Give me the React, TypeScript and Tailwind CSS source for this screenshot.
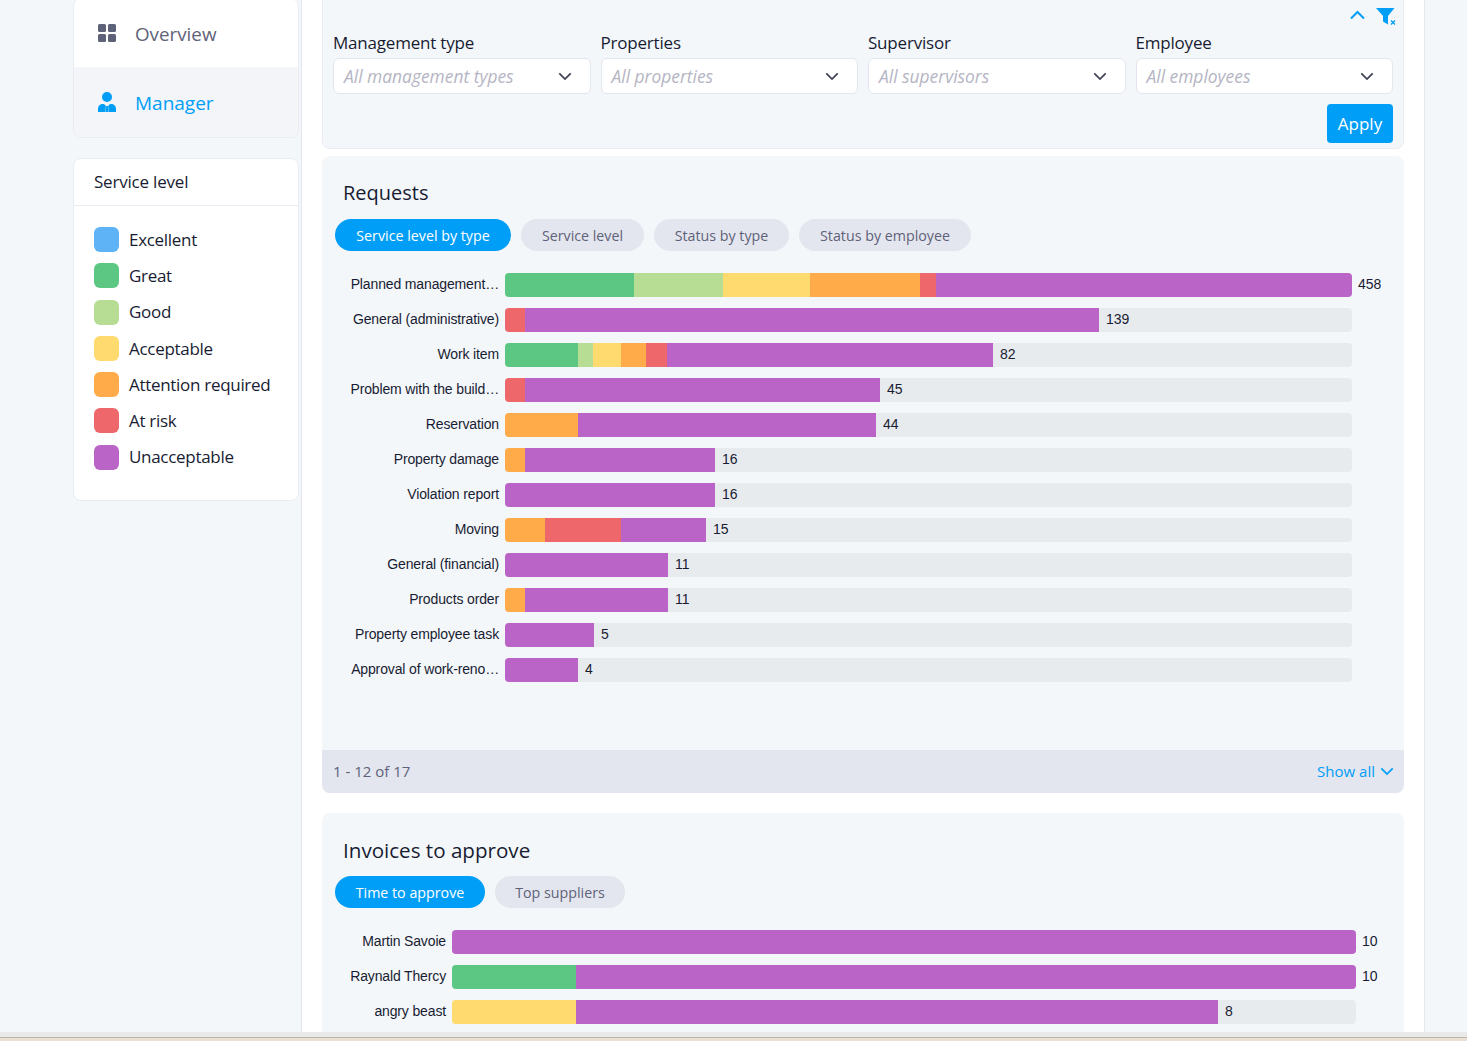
import React from 'react';

const GREEN = 'bg-[#5cc782]';
const LIME = 'bg-[#b7dd95]';
const YELLOW = 'bg-[#ffda6e]';
const ORANGE = 'bg-[#ffab4a]';
const RED = 'bg-[#ee686b]';
const PURPLE = 'bg-[#ba64c8]';

type Row = { label: string; value: number; segments: [string, number][] };

const REQUESTS: Row[] = [
  { label: 'Planned management…', value: 458, segments: [[GREEN, 129], [LIME, 89], [YELLOW, 87], [ORANGE, 110], [RED, 16], [PURPLE, 416]] },
  { label: 'General (administrative)', value: 139, segments: [[RED, 20], [PURPLE, 574]] },
  { label: 'Work item', value: 82, segments: [[GREEN, 73], [LIME, 15], [YELLOW, 28], [ORANGE, 25], [RED, 21], [PURPLE, 326]] },
  { label: 'Problem with the build…', value: 45, segments: [[RED, 20], [PURPLE, 355]] },
  { label: 'Reservation', value: 44, segments: [[ORANGE, 73], [PURPLE, 298]] },
  { label: 'Property damage', value: 16, segments: [[ORANGE, 20], [PURPLE, 190]] },
  { label: 'Violation report', value: 16, segments: [[PURPLE, 210]] },
  { label: 'Moving', value: 15, segments: [[ORANGE, 40], [RED, 76], [PURPLE, 85]] },
  { label: 'General (financial)', value: 11, segments: [[PURPLE, 163]] },
  { label: 'Products order', value: 11, segments: [[ORANGE, 20], [PURPLE, 143]] },
  { label: 'Property employee task', value: 5, segments: [[PURPLE, 89]] },
  { label: 'Approval of work-reno…', value: 4, segments: [[PURPLE, 73]] },
];

const INVOICES: Row[] = [
  { label: 'Martin Savoie', value: 10, segments: [[PURPLE, 904]] },
  { label: 'Raynald Thercy', value: 10, segments: [[GREEN, 124], [PURPLE, 780]] },
  { label: 'angry beast', value: 8, segments: [[YELLOW, 124], [PURPLE, 642]] },
];

const LEGEND: [string, string][] = [
  ['bg-[#5eb3f6]', 'Excellent'],
  [GREEN, 'Great'],
  [LIME, 'Good'],
  [YELLOW, 'Acceptable'],
  [ORANGE, 'Attention required'],
  [RED, 'At risk'],
  [PURPLE, 'Unacceptable'],
];

const FILTERS: [string, string][] = [
  ['Management type', 'All management types'],
  ['Properties', 'All properties'],
  ['Supervisor', 'All supervisors'],
  ['Employee', 'All employees'],
];

const Chevron = ({ up, className }: { up?: boolean; className: string }) => (
  <svg viewBox="0 0 16 10" fill="none" stroke="currentColor" strokeWidth="2" className={className}>
    <path d={up ? 'M1.5 8.5 8 2l6.5 6.5' : 'M1.5 1.5 8 8l6.5-6.5'} />
  </svg>
);

const BarRow = ({ row, labelWidth, trackWidth }: { row: Row; labelWidth: string; trackWidth: number }) => {
  const filled = row.segments.reduce((sum, [, w]) => sum + w, 0);
  const full = filled > trackWidth - 40;

  return (
    <div className="flex h-[24px] items-center font-['Liberation_Sans',sans-serif] text-[14px] text-[#181c32]">
      <div className={`${labelWidth} whitespace-nowrap pb-[1px] pr-[6px] text-right tracking-[-0.14px]`}>{row.label}</div>
      <div className="h-[24px] overflow-hidden rounded-[4px] bg-[#e8ebee]" style={{ width: trackWidth }}>
        <div className="flex h-full">
          {row.segments.map(([color, w], i) => (
            <div key={i} className={`h-full shrink-0 ${color}`} style={{ width: w }} />
          ))}
          {!full && <span className="flex shrink-0 items-center pb-[2px] pl-[7px]">{row.value}</span>}
        </div>
      </div>
      {full && <span className="shrink-0 pb-[2px] pl-[6px]">{row.value}</span>}
    </div>
  );
};

const Pill = ({ active, className, children }: { active?: boolean; className: string; children: React.ReactNode }) => (
  <div
    className={`flex h-[32px] items-center justify-center rounded-full pt-[1px] text-[14.25px] ${className} ${
      active ? 'bg-[#009ef7] text-white' : 'bg-[#e4e6ef] text-[#5e6278]'
    }`}
  >
    {children}
  </div>
);

export default function App() {
  return (
    <div className="flex h-[1041px] w-[1467px] flex-col overflow-hidden bg-white font-['Open_Sans',sans-serif] text-[#181c32]">
      <div className="flex h-[1032px] min-h-0">
        {/* Sidebar */}
        <aside className="w-[302px] shrink-0 border-r border-[#e4e6ef] bg-[#f4f7fa] pl-[73px] pr-[2px]">
          <div className="-mt-[2px] overflow-hidden rounded-[8px] border border-[#e9ecf2] bg-white">
            <div className="flex h-[68px] items-center gap-[19px] pl-[24px] text-[#5e6278]">
              <svg viewBox="0 0 18 18" className="h-[18px] w-[18px]" fill="currentColor">
                <rect x="0" y="0" width="8" height="8" rx="1.5" />
                <rect x="10" y="0" width="8" height="8" rx="1.5" />
                <rect x="0" y="10" width="8" height="8" rx="1.5" />
                <rect x="10" y="10" width="8" height="8" rx="1.5" />
              </svg>
              <span className="pt-[2px] text-[18.8px]">Overview</span>
            </div>
            <div className="flex h-[70px] items-center gap-[19px] bg-[#f3f5f9] pl-[24px] text-[#009ef7]">
              <svg viewBox="0 0 18 20" className="h-[20px] w-[18px]" fill="currentColor">
                <circle cx="9" cy="5" r="5" />
                <path d="M0 20v-3c0-3 2-5 5-5h1l2 2-1 6zM18 20v-3c0-3-2-5-5-5h-1l-2 2 1 6zM8.2 14h1.6l.8 6H7.4z" />
              </svg>
              <span className="pt-[2px] text-[19px]">Manager</span>
            </div>
          </div>

          <div className="mt-[20px] h-[343px] rounded-[8px] border border-[#e9ecf2] bg-white">
            <div className="flex h-[47px] items-center border-b border-[#e9ecf2] pl-[20px] text-[17px] tracking-[-0.2px]">Service level</div>
            <div className="flex flex-col gap-[11.25px] pl-[20px] pt-[21px]">
              {LEGEND.map(([color, label]) => (
                <div key={label} className="flex h-[25px] items-center gap-[10px]">
                  <div className={`h-[25px] w-[25px] rounded-[6px] ${color}`} />
                  <span className="text-[17px] tracking-[-0.3px]">{label}</span>
                </div>
              ))}
            </div>
          </div>
        </aside>

        {/* Main */}
        <main className="w-[1122px] shrink-0 px-[20px]">
          <section className="relative h-[149px] rounded-b-[8px] border-x border-b border-[#e9ecf2] bg-[#f4f7fa] px-[10px]">
            <div className="absolute right-[7px] top-[8px] flex items-start gap-[10px] text-[#009ef7]">
              <Chevron up className="mt-[2px] h-[10px] w-[17px]" />
              <svg viewBox="0 0 20 17" className="h-[17px] w-[20px]" fill="currentColor">
                <path d="M0 0h18.5l-6.5 8v8.5L7 13.5V8z" />
                <path d="M15 12.5l4 4M19 12.5l-4 4" fill="none" stroke="currentColor" strokeWidth="1.3" />
              </svg>
            </div>
            <div className="flex gap-[10px] pt-[32px]">
              {FILTERS.map(([label, placeholder]) => (
                <div key={label} className="w-[257.5px]">
                  <div className="h-[26px] text-[17px] leading-[22px] tracking-[-0.2px]">{label}</div>
                  <div className="flex h-[36px] items-center justify-between rounded-[6px] border border-[#e4e6ef] bg-white pl-[10px] pr-[18px]">
                    <span className="pt-[1px] text-[17.4px] italic text-[#b5b5c3]">{placeholder}</span>
                    <Chevron className="h-[9px] w-[14px] text-[#3f4254]" />
                  </div>
                </div>
              ))}
            </div>
            <div className="mt-[10px] flex justify-end">
              <div className="flex h-[39px] w-[66px] items-center justify-center rounded-[4px] bg-[#009ef7] text-[17px] text-white">Apply</div>
            </div>
          </section>

          <section className="mt-[7px] overflow-hidden rounded-[8px] bg-[#f4f7fa]">
            <div className="h-[594px] pl-[13px] pt-[22px]">
              <h2 className="h-[41px] pl-[8px] text-[20px] leading-[30px]">Requests</h2>
              <div className="flex gap-[10px]">
                <Pill active className="w-[176px]">Service level by type</Pill>
                <Pill className="w-[123px]">Service level</Pill>
                <Pill className="w-[135px]">Status by type</Pill>
                <Pill className="w-[172px]">Status by employee</Pill>
              </div>
              <div className="mt-[22px] flex flex-col gap-[11px]">
                {REQUESTS.map((row) => (
                  <BarRow key={row.label} row={row} labelWidth="w-[170px]" trackWidth={847} />
                ))}
              </div>
            </div>
            <div className="flex h-[43px] items-center justify-between bg-[#e3e6ef] pl-[11px] pr-[10px]">
              <span className="text-[15px] text-[#5e6278]">1 - 12 of 17</span>
              <span className="flex items-center gap-[5px] text-[15px] font-medium text-[#009ef7]">
                Show all
                <Chevron className="h-[9px] w-[14px]" />
              </span>
            </div>
          </section>

          <section className="mt-[20px] h-[260px] rounded-t-[8px] bg-[#f4f7fa] pl-[13px] pt-[22px]">
            <h2 className="h-[41px] pl-[8px] text-[20.6px] leading-[30px]">Invoices to approve</h2>
            <div className="flex gap-[10px]">
              <Pill active className="w-[150px]">Time to approve</Pill>
              <Pill className="w-[130px]">Top suppliers</Pill>
            </div>
            <div className="mt-[22px] flex flex-col gap-[11px]">
              {INVOICES.map((row) => (
                <BarRow key={row.label} row={row} labelWidth="w-[117px]" trackWidth={904} />
              ))}
            </div>
          </section>
        </main>

        <div className="flex-1 border-l border-[#e4e6ef] bg-[#f4f7fa]" />
      </div>

      {/* bottom edge of the window */}
      <div className="h-[5px] bg-[#e9e9e9]" />
      <div className="h-[4px] border-t border-[#bdb5ae] bg-[#ecdfd4]" />
    </div>
  );
}
